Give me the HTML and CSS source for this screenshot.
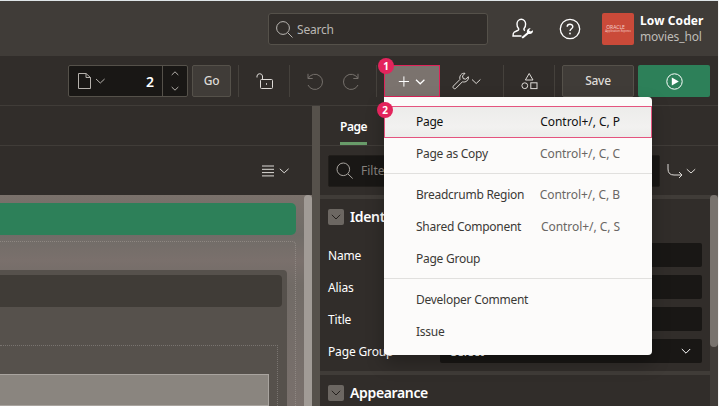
FILE: index.html
```html
<!DOCTYPE html>
<html lang="en">
<head>
<meta charset="utf-8">
<title>Page Designer</title>
<link rel="stylesheet" href="styles.css">
</head>
<body>
<div class="app">
  <header class="header">
    <div class="search">
      <svg width="18" height="18" viewBox="0 0 18 18"><circle cx="7" cy="7" r="6.4"/><path d="M11.7 11.7L16.5 16.5"/></svg>
      <span>Search</span>
    </div>
    <svg class="admin" width="22" height="22" viewBox="0 0 22 22"><path d="M13 12.5C11.6 11.8 11.6 11 12.4 10C13.4 8.8 13.6 7.6 13.6 6A4.3 4.8 0 0 0 5 6C5 7.6 5.2 8.8 6.2 10C7 11 7 11.8 5.6 12.5L2.3 14Q1 14.8 1 18H9.5" stroke-width="1.4"/><path class="solid" d="M10 18.7L15 14.6C14.4 12 16 10.1 18.7 10.2L16.9 12.3L18.7 13.6L21 12.2C21.4 14.9 19 16.7 16.5 15.9L11.6 20.1C10.5 20.8 9.2 19.8 10 18.7Z"/></svg>
    <svg class="help" width="22" height="22" viewBox="0 0 22 22"><circle cx="11" cy="11" r="9.7" stroke-width="1.3"/><path d="M8.2 8.8C8.2 5.4 13.8 5.5 13.8 8.7C13.8 10.8 11 10.8 11 13.1" stroke-width="1.4"/><circle class="solid" cx="11" cy="15.5" r=".9"/></svg>
    <div class="avatar"><b>ORACLE</b><span>Application Express</span></div>
    <div class="user"><b>Low Coder</b><span>movies_hol</span></div>
  </header>

  <div class="toolbar">
    <div class="page-picker">
      <svg width="30" height="18" viewBox="0 0 30 18"><path d="M1.5 1.5H9L13.5 5.5V16.5H1.5ZM9 1.5V5.5H13.5"/><path d="M19 7L23.3 11L27.6 7"/></svg>
      <b>2</b>
      <div class="stepper">
        <svg width="8" height="5" viewBox="0 0 8 5"><path d="M.7 4L4 .8L7.3 4"/></svg>
        <svg width="8" height="5" viewBox="0 0 8 5"><path d="M.7 1L4 4.2L7.3 1"/></svg>
      </div>
    </div>
    <div class="btn go">Go</div>
    <i class="divider"></i>
    <div class="tool lock"><svg width="18" height="18" viewBox="0 0 18 18"><rect x="4.5" y="7.5" width="12" height="9" rx="1"/><path d="M6.5 7.5V4A2.8 2.8 0 0 0 1 4V5.5"/><path d="M10.5 11.2V12.8"/></svg></div>
    <i class="divider"></i>
    <div class="tool history">
      <svg width="17" height="17" viewBox="0 0 17 17"><path d="M1 .8V5.5H5.7M1.2 5.3A7.6 7.6 0 1 1 1 12"/></svg>
      <svg width="17" height="17" viewBox="0 0 17 17"><path d="M16 .8V5.5H11.3M15.8 5.3A7.6 7.6 0 1 0 16 12"/></svg>
    </div>
    <i class="divider"></i>
    <div class="create">
      <svg width="28" height="12" viewBox="0 0 28 12"><path d="M.8 6.5H11M5.9 1.4V11.6"/><path d="M18 4.8L22.2 8.8L26.4 4.8" stroke-width="1.2"/></svg>
      <em class="badge">1</em>
      <div class="menu">
        <div class="item current"><span>Page</span><kbd>Control+/, C, P</kbd><em class="badge">2</em></div>
        <div class="item"><span>Page as Copy</span><kbd>Control+/, C, C</kbd></div>
        <hr>
        <div class="item"><span>Breadcrumb Region</span><kbd>Control+/, C, B</kbd></div>
        <div class="item"><span>Shared Component</span><kbd>Control+/, C, S</kbd></div>
        <div class="item"><span>Page Group</span></div>
        <hr>
        <div class="item"><span>Developer Comment</span></div>
        <div class="item"><span>Issue</span></div>
      </div>
    </div>
    <div class="tool utilities"><svg width="31" height="18" viewBox="0 0 31 18"><path d="M1.4 14L8 7.4C7 4 9.5 .7 13 1.3L10.5 4L11.2 6.6L13.7 7.2L16.3 4.7C17 8.2 13.8 10.8 10.4 9.8L3.8 16.4C2.2 17.6.1 15.6 1.4 14Z"/><path d="M20 7.5L24.2 11.5L28.4 7.5"/></svg></div>
    <i class="divider"></i>
    <div class="tool shapes"><svg width="17" height="18" viewBox="0 0 17 18"><path d="M8.2 1.5L12 8H4.4Z"/><circle cx="3.8" cy="13.7" r="2.9"/><rect x="9.8" y="10.8" width="6.2" height="5.8"/></svg></div>
    <i class="divider"></i>
    <div class="btn save">Save</div>
    <div class="btn run"><svg width="17" height="17" viewBox="0 0 17 17"><circle cx="8.5" cy="8.5" r="7.7"/><path class="solid" d="M5.8 4.4L12.8 8.5L5.8 12.6Z"/></svg></div>
  </div>

  <div class="workspace">
    <section class="layout-pane">
      <div class="tabs"></div>
      <div class="pane-tools"><svg width="28" height="12" viewBox="0 0 28 12"><path d="M0 1H12M0 4.3H12M0 7.6H12M0 10.9H12"/><path d="M17.8 3.8L22.2 7.8L26.6 3.8"/></svg></div>
      <div class="canvas">
        <div class="canvas-body">
          <div class="drop-bar"></div>
          <div class="outline">
            <div class="region">
              <div class="region-head"></div>
              <div class="region-body"><div class="component"></div></div>
            </div>
          </div>
        </div>
        <div class="canvas-scroll"></div>
      </div>
    </section>
    <div class="splitter"></div>
    <section class="properties">
      <div class="tabs"><b>Page</b></div>
      <div class="pane-tools">
        <div class="filter"><svg width="18" height="18" viewBox="0 0 18 18"><circle cx="7.3" cy="7.3" r="6.3"/><path d="M12 12L16.7 16.5"/></svg><span>Filter</span></div>
        <svg width="29" height="16" viewBox="0 0 29 16"><path d="M1 1V6Q1 12 7 12H15M12 9L15 12L12 15"/><path d="M19.8 6.2L24 10L28.2 6.2"/></svg>
      </div>
      <div class="prop-scroll">
        <div class="groups">
          <div class="group">
            <h3><i><svg width="10" height="6" viewBox="0 0 10 6"><path d="M.8.8L5 5L9.2.8"/></svg></i>Identification</h3>
            <label>Name<span></span></label>
            <label>Alias<span></span></label>
            <label>Title<span></span></label>
            <label>Page Group<span>- Select -<svg width="10" height="7" viewBox="0 0 10 7"><path d="M.8 1L5 5.2L9.2 1"/></svg></span></label>
          </div>
          <div class="group">
            <h3><i><svg width="10" height="6" viewBox="0 0 10 6"><path d="M.8.8L5 5L9.2.8"/></svg></i>Appearance</h3>
          </div>
        </div>
        <div class="track"><div class="thumb"></div></div>
      </div>
    </section>
  </div>
</div>
</body>
</html>
```

FILE: styles.css
```css
* { box-sizing: border-box; }
body {
  margin: 0;
  width: 719px;
  height: 406px;
  overflow: hidden;
  background: #f4f5f5;
  font: 12px/16px "Noto Sans", "Open Sans", sans-serif;
  color: #fff;
}
svg { display: block; flex: none; fill: none; stroke: currentColor; stroke-width: 1; }
svg .solid { fill: currentColor; stroke: none; }
em { font-style: normal; }
.app {
  width: 718px;
  height: 406px;
  display: flex;
  flex-direction: column;
  border-top: 1px solid #dfe5e8;
  background: #312d2a;
}

.header {
  height: 55px;
  flex: none;
  display: flex;
  align-items: center;
  padding: 1px 0 0 268px;
  background: #403c38;
}
.search {
  width: 220px;
  height: 32px;
  display: flex;
  align-items: center;
  gap: 3px;
  padding: 1px 0 0 7px;
  border: 1px solid #55514a;
  border-radius: 3px;
  background: #312d2a;
  color: #bab7b3;
  letter-spacing: -.2px;
}
.admin { margin-left: 24px; }
.help { margin-left: 25px; }
.avatar {
  width: 32px;
  height: 32px;
  margin-left: 21px;
  padding-top: 12px;
  border-radius: 2px;
  background: #ca4a39;
  color: #f4cfc9;
  text-align: center;
  overflow: hidden;
}
.avatar b, .avatar span { display: block; white-space: nowrap; }
.avatar b { font-size: 5px; line-height: 5px; font-weight: 400; margin-right: 5px; }
.avatar span { font-size: 2.8px; line-height: 3px; }
.user { margin-left: 6px; line-height: 16px; }
.user b, .user span { display: block; }
.user b { font-weight: 700; letter-spacing: .1px; }
.user span { color: #bebbb7; letter-spacing: -.12px; }

.toolbar {
  height: 50px;
  flex: none;
  display: flex;
  padding: 9px 8px 8px 68px;
  border-bottom: 1px solid #403c38;
  color: #dedbd7;
}
.page-picker {
  width: 120px;
  height: 32px;
  display: flex;
  align-items: center;
  padding-left: 8px;
  border: 1px solid #55514a;
  border-radius: 2px;
  background: #191715;
  color: #b5b1ac;
}
.page-picker b { margin-left: auto; margin-right: 8px; padding-top: 2px; color: #fff; font-size: 14px; font-weight: 600; }
.stepper {
  width: 25px;
  height: 30px;
  display: flex;
  flex-direction: column;
  align-items: center;
  justify-content: space-between;
  padding: 5px 0;
  border-left: 1px solid #55514a;
}
.btn {
  height: 32px;
  display: flex;
  align-items: center;
  justify-content: center;
  border: 1px solid #55514a;
  border-radius: 2px;
  background: #403c38;
  font-weight: 500;
  letter-spacing: -.3px;
}
.go { width: 39px; margin: 0 7px 0 4px; }
.save { width: 72px; margin-left: 7px; }
.run { width: 72px; margin-left: 4px; border: 0; background: #2d8059; color: #fff; }
.divider { width: 1px; height: 32px; background: #45413c; flex: none; }
.tool { height: 32px; display: flex; align-items: center; justify-content: center; }
.lock { width: 50px; padding-left: 1px; }
.history { width: 86px; gap: 18px; color: #76716c; }
.utilities { width: 63px; padding-right: 8px; }
.shapes { width: 50px; }
.create {
  position: relative;
  width: 56px;
  height: 32px;
  margin-left: 7px;
  display: flex;
  align-items: center;
  justify-content: center;
  border: 1px solid #de2359;
  background: #7b736e;
  color: #fff;
}
.badge {
  position: absolute;
  left: -7px;
  top: -8px;
  width: 16px;
  height: 16px;
  border-radius: 50%;
  background: #e3245c;
  color: #fff;
  font: 700 10px/16px "Noto Sans", sans-serif;
  text-align: center;
}
.menu {
  position: absolute;
  z-index: 5;
  left: -1px;
  top: 31px;
  width: 268px;
  height: 258px;
  padding-top: 9px;
  border-radius: 0 4px 4px 4px;
  background: #fcfbfa;
  color: #3b3936;
  box-shadow: 0 8px 18px rgba(0, 0, 0, .28);
}
.item {
  position: relative;
  height: 32px;
  display: flex;
  align-items: center;
  justify-content: space-between;
  padding: 0 32px;
  letter-spacing: -.26px;
}
.item kbd { font: inherit; letter-spacing: -.05px; color: #6a6764; }
.current { background: linear-gradient(#ececea, #f2f1f0 65%, #ececea); color: #111; box-shadow: inset 0 0 0 1px #e4547f; }
.current kbd { color: #111; }
.current .badge { left: -7px; top: -4px; letter-spacing: 0; }
.menu hr { height: 1px; margin: 3px 0 5px; border: 0; background: #e1e0de; }

.workspace { flex: 1; min-height: 0; display: flex; }
.layout-pane { width: 312px; display: flex; flex-direction: column; }
.tabs { height: 40px; flex: none; padding-left: 20px; border-bottom: 1px solid #403c38; }
.tabs b {
  display: block;
  width: 27px;
  height: 39px;
  padding-top: 13px;
  border-bottom: 3px solid #689b69;
  font-weight: 600;
  letter-spacing: -.5px;
}
.pane-tools { height: 49px; flex: none; display: flex; align-items: center; }
.layout-pane .pane-tools { justify-content: flex-end; padding-right: 22px; color: #dedbd7; }
.canvas {
  flex: 1;
  min-height: 0;
  display: flex;
  overflow: hidden;
  background: linear-gradient(#7a716b, #706c67 40px, #7a706c 65px, #716b66 90px, #79706c);
}
.canvas-body { width: 304px; padding-top: 8px; }
.drop-bar { width: 296px; height: 32px; border-radius: 0 5px 5px 0; background: #2d8059; }
.outline {
  width: 296px;
  height: 165px;
  margin-top: 6px;
  padding-top: 28px;
  border: 1px dotted #8e8782;
  border-width: 1px 1px 0 0;
  border-radius: 0 4px 0 0;
}
.region { width: 287px; height: 136px; padding-top: 5px; border-radius: 0 4px 0 0; background: #56514c; }
.region-head { width: 282px; height: 32px; border-radius: 0 4px 4px 0; background: #403c37; }
.region-body {
  width: 278px;
  height: 61px;
  margin-top: 38px;
  padding-top: 28px;
  border: 1px dotted #797470;
  border-width: 1px 1px 0 0;
}
.component { width: 269px; height: 32px; border: 1px solid #a9a49f; border-left: 0; background: #8a857f; }
.canvas-scroll { width: 8px; border-radius: 4px 4px 0 0; background: #a19b96; }
.splitter { width: 8px; background: #56514b; }

.properties { width: 398px; display: flex; flex-direction: column; }
.properties .pane-tools { padding-left: 8px; }
.properties .pane-tools > svg { margin-left: 7px; color: #dedbd7; }
.filter {
  width: 332px;
  height: 32px;
  display: flex;
  align-items: center;
  gap: 7px;
  padding-left: 7px;
  border: 1px solid #211e1b;
  border-radius: 2px;
  background: #191715;
  color: #85817c;
}
.filter svg { color: #aaa6a1; }
.prop-scroll { flex: 1; min-height: 0; display: flex; }
.groups { width: 390px; }
.group { border-top: 4px solid #403c38; padding: 0 8px; }
.group h3 {
  height: 36px;
  margin: 0;
  display: flex;
  align-items: center;
  gap: 6px;
  font-size: 14px;
  font-weight: 600;
  letter-spacing: -.35px;
}
.group + .group h3 { height: 31px; padding-top: 4px; }
.group h3 i {
  width: 16px;
  height: 16px;
  display: flex;
  align-items: center;
  justify-content: center;
  border-radius: 2px;
  background: #6c6762;
  color: #25211e;
}
.group label {
  display: flex;
  align-items: center;
  justify-content: space-between;
  height: 24px;
  margin-bottom: 8px;
  line-height: 17px;
  letter-spacing: -.15px;
}
.group h3 + label { margin-top: 8px; }
.group label span {
  width: 262px;
  height: 24px;
  display: flex;
  align-items: center;
  justify-content: space-between;
  padding: 0 11px 0 4px;
  border-radius: 2px;
  background: #191715;
  font-weight: 500;
}
.track { width: 8px; background: #403c38; }
.thumb { height: 152px; border-radius: 4px; background: #78736e; }
```
